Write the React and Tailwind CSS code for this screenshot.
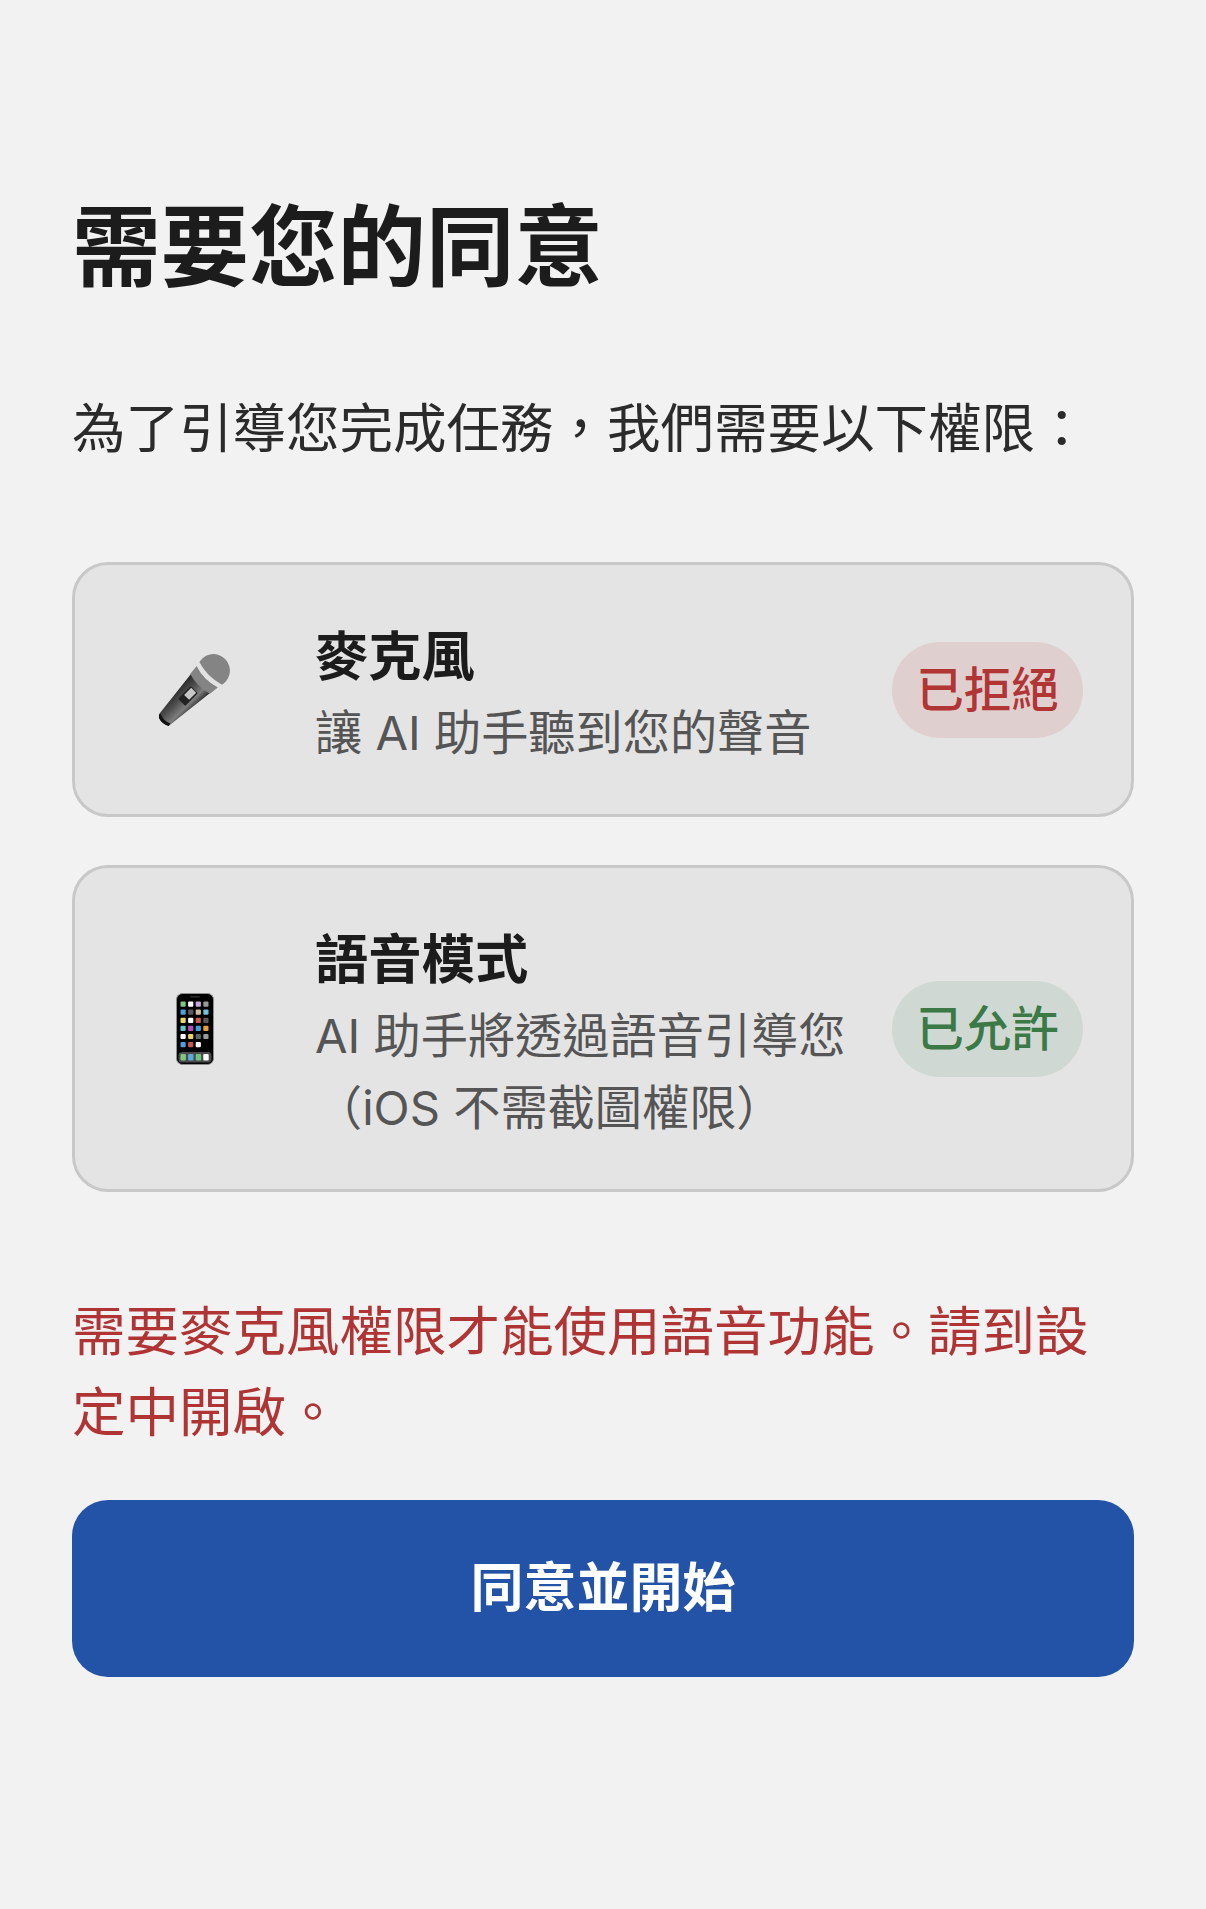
import React from 'react';

const fontStack = 'font-["Inter","Noto_Sans_CJK_TC",sans-serif]';

const MicIcon = () => (
  <svg viewBox="0 0 72 72" className="w-[72px] h-[72px]">
    <defs>
      <linearGradient id="micBody" x1="0" x2="1" y1="0" y2="0">
        <stop offset="0" stopColor="#262626" />
        <stop offset="0.4" stopColor="#505050" />
        <stop offset="0.72" stopColor="#7d7d7d" />
        <stop offset="1" stopColor="#262626" />
      </linearGradient>
      <pattern id="micMesh" width="2" height="2" patternUnits="userSpaceOnUse">
        <rect width="2" height="2" fill="#a4a4a4" />
        <circle cx="1" cy="1" r="0.7" fill="#4a4a4a" />
      </pattern>
    </defs>
    <g transform="translate(54.5 16.5) rotate(45)">
      <path d="M-14 14 L14 14 L7.5 71 Q0 75 -7.5 71 Z" fill="url(#micBody)" />
      <path d="M-15 7 A16.5 16.5 0 1 1 15 7 L14 15 L-14 15 Z" fill="url(#micMesh)" />
      <path d="M-16 4 Q0 9 16 4 L15.6 9 Q0 14 -15.6 9 Z" fill="#e2e2e2" />
      <path d="M-15 9 Q0 14 15 9 L14 19 Q0 23 -14 19 Z" fill="url(#micMesh)" />
      <rect x="-5" y="27" width="10" height="18" rx="1" fill="#222222" />
      <rect x="-3.5" y="28" width="7" height="10" fill="#c8c8c8" />
      <path d="M-7.5 71 Q0 75 7.5 71 L7 68 Q0 71 -7 68 Z" fill="#111111" />
    </g>
  </svg>
);

const phoneRows = [
  ['#7fc77f', '#ffffff', '#c9a6dc', '#9a9a9a'],
  ['#4f9fdc', '#5a5a5a', '#cdbb9e', '#6cc4dc'],
  ['#ecd46c', '#ffffff', '#c9574c', '#5a5a5a'],
  ['#62c4c8', '#b44cc0', '#3f9fdc', '#e89c3c'],
  ['#ffffff', '#ecd46c', '#5e6660', '#9a9a9a'],
  ['#4f9fdc', '#c9574c', '#ffffff', null],
];
const phoneDock = ['#7fc77f', '#5aa9dc', '#6cc47f', '#ffffff'];

const PhoneIcon = () => (
  <svg viewBox="0 0 38 72" className="w-[38px] h-[72px]">
    <rect x="0.5" y="0.5" width="37" height="71" rx="6" fill="#000000" stroke="#8e8e8e" />
    <rect x="14" y="3" width="10" height="1.6" rx="0.8" fill="#2b2b2b" />
    {phoneRows.map((row, r) =>
      row.map((color, c) =>
        color ? (
          <rect key={`${r}-${c}`} x={4.5 + c * 7.6} y={8.5 + r * 8.1} width="5.2" height="5.2" rx="1" fill={color} />
        ) : null
      )
    )}
    <rect x="2.5" y="59" width="33" height="10.5" rx="3.5" fill="#4a4a4a" />
    {phoneDock.map((color, c) => (
      <rect key={c} x={4.5 + c * 7.6} y="61" width="5.4" height="6.4" rx="1" fill={color} />
    ))}
  </svg>
);

const PermissionCard = ({ icon, title, desc, status, statusClass }) => (
  <div className="flex items-center gap-[48px] px-[48px] py-[45px] bg-[#e4e4e4] border-[3px] border-[#c8c8c8] rounded-[36px]">
    <div className="w-[144px] shrink-0 flex justify-center">{icon}</div>
    <div className="flex-1 min-w-0 pt-[6px]">
      <div className="text-[53.3px] leading-[81px] font-bold text-[#1c1c1c]">{title}</div>
      <div className="text-[47.2px] leading-[72px] text-[#555555] whitespace-nowrap">{desc}</div>
    </div>
    <div className={`shrink-0 w-[191px] text-center py-[12px] rounded-full text-[47.5px] leading-[72px] font-medium ${statusClass}`}>
      {status}
    </div>
  </div>
);

export default function App() {
  return (
    <div className={`min-h-[1909px] bg-[#f2f2f2] px-[72px] pt-[187px] ${fontStack}`}>
      <h1 className="text-[88.5px] leading-[120px] font-bold text-[#1c1c1c]">需要您的同意</h1>
      <p className="mt-[82px] text-[53.5px] leading-[80px] text-[#2b2b2b]">為了引導您完成任務，我們需要以下權限：</p>

      <div className="mt-[93px] flex flex-col gap-[48px]">
        <PermissionCard
          icon={<MicIcon />}
          title="麥克風"
          desc="讓 AI 助手聽到您的聲音"
          status="已拒絕"
          statusClass="bg-[#e0cfcf] text-[#b23535]"
        />
        <PermissionCard
          icon={<PhoneIcon />}
          title="語音模式"
          desc={<>AI 助手將透過語音引導您<br />（iOS 不需截圖權限）</>}
          status="已允許"
          statusClass="bg-[#cfd8d2] text-[#3b7a46]"
        />
      </div>

      <p className="mt-[99px] text-[53.5px] leading-[81px] text-[#b03434]">
        需要麥克風權限才能使用語音功能。請到設定中開啟。
      </p>

      <button className="mt-[47px] w-full h-[177px] rounded-[36px] bg-[#2353a7] text-white text-[53px] font-bold">
        同意並開始
      </button>
    </div>
  );
}
